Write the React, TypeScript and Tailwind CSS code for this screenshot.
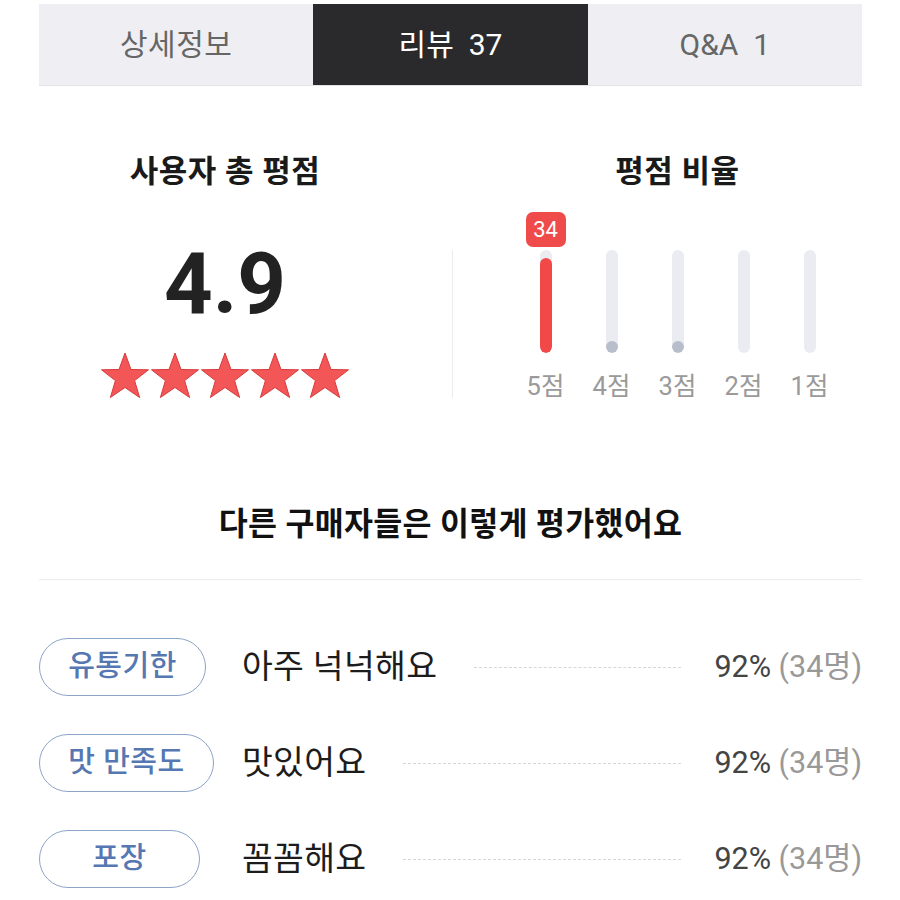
import React from "react";

const FONT = { fontFamily: "Roboto, 'Noto Sans CJK KR', 'Noto Sans', sans-serif" };

function Star() {
  return (
    <svg width="50" height="48" viewBox="0 0 50 48">
      <polygon
        points="25,2 31,18.5 48.5,18.8 34.6,29.6 39.6,46.5 25,36.5 10.4,46.5 15.4,29.6 1.5,18.8 19,18.5"
        fill="#f25656"
        stroke="#d9393b"
        strokeWidth="1"
        strokeLinejoin="round"
      />
    </svg>
  );
}

const bars = [
  { label: "5점", fill: 95, badge: "34" },
  { label: "4점", fill: 12 },
  { label: "3점", fill: 12 },
  { label: "2점", fill: 0 },
  { label: "1점", fill: 0 },
];

const rows = [
  { tag: "유통기한", w: "w-[167px]", text: "아주 넉넉해요" },
  { tag: "맛 만족도", w: "w-[175px]", text: "맛있어요" },
  { tag: "포장", w: "w-[161px]", text: "꼼꼼해요" },
];

export default function App() {
  return (
    <div className="w-[900px] h-[900px] bg-white overflow-hidden" style={FONT}>
      <div className="ml-[39px] w-[823px] pt-[4px]">
        {/* Tabs */}
        <div className="grid grid-cols-3 h-[82px] bg-[#efeff3] border-b border-[#e3e3e8]">
          <div className="flex items-center justify-center text-[30px] tracking-[0.5px] text-[#666]">상세정보</div>
          <div className="flex items-center justify-center text-[30px] text-white bg-[#2a2a2c]">리뷰&nbsp;&nbsp;37</div>
          <div className="flex items-center justify-center text-[30px] text-[#666]">Q&amp;A&nbsp;&nbsp;1</div>
        </div>

        {/* Ratings */}
        <div className="flex mt-[66px]">
          <div className="w-[372px] flex flex-col items-center">
            <div className="h-[40px] leading-[40px] text-[31px] tracking-[0.5px] font-bold text-[#1a1a1a]">사용자 총 평점</div>
            <div className="mt-[50px] text-[85px] leading-none font-bold text-[#222]" style={{ fontFamily: "Roboto, sans-serif" }}>4.9</div>
            <div className="mt-[24px] flex">
              {[0, 1, 2, 3, 4].map((i) => (
                <Star key={i} />
              ))}
            </div>
          </div>
          <div className="ml-[41px] mt-[98px] w-px h-[148px] bg-[#ececf0]" />
          <div className="ml-[40px] w-[369px] flex flex-col items-center">
            <div className="h-[40px] leading-[40px] text-[31px] tracking-[0.5px] font-bold text-[#1a1a1a]">평점 비율</div>
            <div className="mt-[20px] flex">
              {bars.map((b) => (
                <div key={b.label} className="w-[66px] flex flex-col items-center">
                  <div className="h-[35px] flex items-center justify-center">
                    {b.badge ? (
                      <div className="w-[40px] h-[35px] rounded-[7px] bg-[#f04b4b] text-white text-[22px] flex items-center justify-center">
                        {b.badge}
                      </div>
                    ) : null}
                  </div>
                  <div className="mt-[3px] w-[12px] h-[103px] rounded-full bg-[#ebecf1] flex flex-col justify-end overflow-hidden">
                    {b.fill > 20 ? (
                      <div className="w-full rounded-full bg-[#f24848]" style={{ height: b.fill }} />
                    ) : b.fill > 0 ? (
                      <div className="w-[12px] h-[12px] rounded-full bg-[#b8bdcc]" />
                    ) : null}
                  </div>
                  <div className="mt-[17px] h-[32px] leading-[32px] text-[25.5px] text-[#9a9a9a]">{b.label}</div>
                </div>
              ))}
            </div>
          </div>
        </div>

        {/* Summary heading */}
        <div className="mt-[103px] h-[40px] leading-[40px] text-center text-[31.5px] tracking-[0.3px] font-bold text-[#111]">
          다른 구매자들은 이렇게 평가했어요
        </div>
        <div className="mt-[34px] h-px bg-[#ececee]" />

        {/* Rows */}
        <div className="mt-[58px] flex flex-col gap-[38px]">
          {rows.map((r) => (
            <div key={r.tag} className="flex items-center h-[58px]">
              <div className="w-[203px] shrink-0">
                <div className={`${r.w} h-[58px] rounded-full border-[1.5px] border-[#8da4c9] flex items-center justify-center text-[29px] tracking-[0.5px] text-[#5577b2] font-medium`}>
                  {r.tag}
                </div>
              </div>
              <div className="text-[33.5px] tracking-[0.3px] text-[#1c1c1c] leading-none">{r.text}</div>
              <div className="flex-1 ml-[37px] mr-[33px] border-t border-dashed border-[#d6d6d8]" />
              <div className="text-[30.5px] leading-none">
                <span className="text-[#444]">92%</span>
                <span className="text-[#999]"> (34명)</span>
              </div>
            </div>
          ))}
        </div>
      </div>
    </div>
  );
}
